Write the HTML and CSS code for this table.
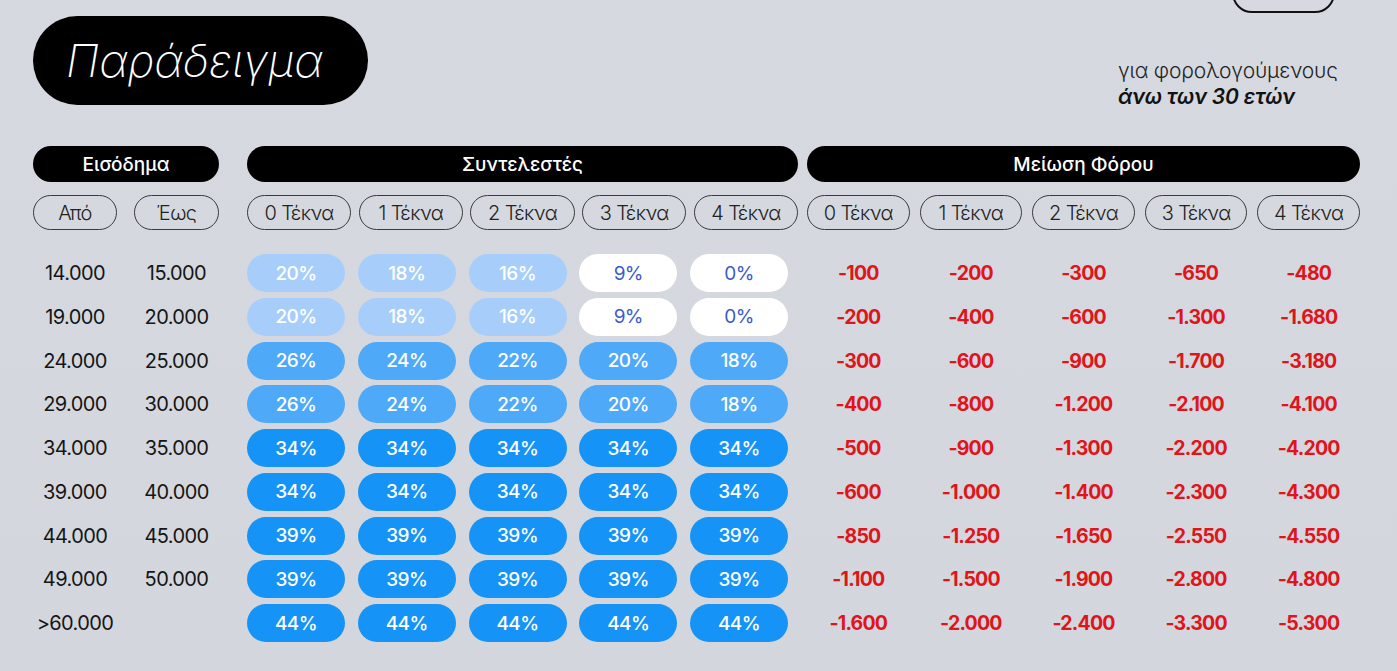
FILE: index.html
```html
<!DOCTYPE html>
<html lang="el">
<head>
<meta charset="utf-8">
<title>Παράδειγμα</title>
<link rel="stylesheet" href="styles.css">
</head>
<body>
<div class="page">
  <div class="top">
    <div class="title">Παράδειγμα</div>
    <div class="aside">
      <div class="tab"></div>
      <div class="sub">
        <div class="sub-line">για φορολογούμενους</div>
        <div class="sub-line strong">άνω των 30 ετών</div>
      </div>
    </div>
  </div>

  <div class="table">
    <div class="section income">
      <div class="head">Εισόδημα</div>
      <div class="labels two">
        <div class="label">Από</div>
        <div class="label">Έως</div>
      </div>
      <div class="rows two">
        <div class="num">14.000</div><div class="num">15.000</div>
        <div class="num">19.000</div><div class="num">20.000</div>
        <div class="num">24.000</div><div class="num">25.000</div>
        <div class="num">29.000</div><div class="num">30.000</div>
        <div class="num">34.000</div><div class="num">35.000</div>
        <div class="num">39.000</div><div class="num">40.000</div>
        <div class="num">44.000</div><div class="num">45.000</div>
        <div class="num">49.000</div><div class="num">50.000</div>
        <div class="num">&gt;60.000</div><div class="num"></div>
      </div>
    </div>

    <div class="section rates">
      <div class="head">Συντελεστές</div>
      <div class="labels five">
        <div class="label">0 Τέκνα</div>
        <div class="label">1 Τέκνα</div>
        <div class="label">2 Τέκνα</div>
        <div class="label">3 Τέκνα</div>
        <div class="label">4 Τέκνα</div>
      </div>
      <div class="rows pills">
        <div class="pill light">20%</div><div class="pill light">18%</div><div class="pill light">16%</div><div class="pill white">9%</div><div class="pill white">0%</div>
        <div class="pill light">20%</div><div class="pill light">18%</div><div class="pill light">16%</div><div class="pill white">9%</div><div class="pill white">0%</div>
        <div class="pill mid">26%</div><div class="pill mid">24%</div><div class="pill mid">22%</div><div class="pill mid">20%</div><div class="pill mid">18%</div>
        <div class="pill mid">26%</div><div class="pill mid">24%</div><div class="pill mid">22%</div><div class="pill mid">20%</div><div class="pill mid">18%</div>
        <div class="pill strong">34%</div><div class="pill strong">34%</div><div class="pill strong">34%</div><div class="pill strong">34%</div><div class="pill strong">34%</div>
        <div class="pill strong">34%</div><div class="pill strong">34%</div><div class="pill strong">34%</div><div class="pill strong">34%</div><div class="pill strong">34%</div>
        <div class="pill strong">39%</div><div class="pill strong">39%</div><div class="pill strong">39%</div><div class="pill strong">39%</div><div class="pill strong">39%</div>
        <div class="pill strong">39%</div><div class="pill strong">39%</div><div class="pill strong">39%</div><div class="pill strong">39%</div><div class="pill strong">39%</div>
        <div class="pill strong">44%</div><div class="pill strong">44%</div><div class="pill strong">44%</div><div class="pill strong">44%</div><div class="pill strong">44%</div>
      </div>
    </div>

    <div class="section cuts">
      <div class="head">Μείωση Φόρου</div>
      <div class="labels five wide">
        <div class="label">0 Τέκνα</div>
        <div class="label">1 Τέκνα</div>
        <div class="label">2 Τέκνα</div>
        <div class="label">3 Τέκνα</div>
        <div class="label">4 Τέκνα</div>
      </div>
      <div class="rows five wide">
        <div class="neg">-100</div><div class="neg">-200</div><div class="neg">-300</div><div class="neg">-650</div><div class="neg">-480</div>
        <div class="neg">-200</div><div class="neg">-400</div><div class="neg">-600</div><div class="neg">-1.300</div><div class="neg">-1.680</div>
        <div class="neg">-300</div><div class="neg">-600</div><div class="neg">-900</div><div class="neg">-1.700</div><div class="neg">-3.180</div>
        <div class="neg">-400</div><div class="neg">-800</div><div class="neg">-1.200</div><div class="neg">-2.100</div><div class="neg">-4.100</div>
        <div class="neg">-500</div><div class="neg">-900</div><div class="neg">-1.300</div><div class="neg">-2.200</div><div class="neg">-4.200</div>
        <div class="neg">-600</div><div class="neg">-1.000</div><div class="neg">-1.400</div><div class="neg">-2.300</div><div class="neg">-4.300</div>
        <div class="neg">-850</div><div class="neg">-1.250</div><div class="neg">-1.650</div><div class="neg">-2.550</div><div class="neg">-4.550</div>
        <div class="neg">-1.100</div><div class="neg">-1.500</div><div class="neg">-1.900</div><div class="neg">-2.800</div><div class="neg">-4.800</div>
        <div class="neg">-1.600</div><div class="neg">-2.000</div><div class="neg">-2.400</div><div class="neg">-3.300</div><div class="neg">-5.300</div>
      </div>
    </div>
  </div>
</div>
</body>
</html>
```

FILE: styles.css
```css
* { box-sizing: border-box; }

html, body {
  margin: 0;
  padding: 0;
  background: #d5d9df;
}

body {
  font-family: Inter, "Noto Sans", "Liberation Sans", sans-serif;
  color: #111;
  overflow: hidden;
}

.page {
  width: 1397px;
  height: 671px;
  padding: 0 37px 0 33px;
  background: linear-gradient(180deg, #d6dae0 0%, #d3d7dd 100%);
}

/* Top */
.top {
  display: flex;
  justify-content: space-between;
  align-items: flex-start;
}

.title {
  margin-top: 16px;
  width: 335px;
  height: 89px;
  border-radius: 45px;
  background: #000;
  color: #fff;
  font-size: 45px;
  font-weight: 200;
  font-style: italic;
  display: flex;
  align-items: center;
  padding-left: 33px;
}

.aside {
  display: flex;
  flex-direction: column;
  align-items: flex-end;
}

.tab {
  width: 103px;
  height: 40px;
  margin-top: -27px;
  margin-right: 25px;
  border: 2px solid #111;
  border-radius: 20px;
}

.sub {
  margin-top: 45px;
  width: 242px;
  font-size: 21px;
  line-height: 26px;
  color: #222;
  font-weight: 300;
  letter-spacing: -0.2px;
}

.sub-line.strong {
  font-weight: 600;
  font-style: italic;
  color: #111;
}

/* Table */
.table {
  display: flex;
  margin-top: 36px;
}

.section {
  display: flex;
  flex-direction: column;
}

.income { width: 186px; }
.rates { width: 551px; margin-left: 28px; }
.cuts { width: 553px; margin-left: 9px; }

.head {
  height: 36px;
  border-radius: 18px;
  background: #000;
  color: #fff;
  font-size: 19px;
  font-weight: 500;
  display: flex;
  align-items: center;
  justify-content: center;
}

.labels {
  display: grid;
  margin-top: 13px;
}

.labels.two { grid-template-columns: 84px 85px; column-gap: 17px; }
.labels.five { grid-template-columns: repeat(5, 1fr); column-gap: 7.5px; }
.labels.five.wide { column-gap: 10px; }

.label {
  height: 35px;
  border: 1px solid #3a3a3a;
  border-radius: 18px;
  font-size: 20px;
  font-weight: 300;
  color: #222;
  display: flex;
  align-items: center;
  justify-content: center;
  letter-spacing: -0.6px;
}

.rows {
  display: grid;
  margin-top: 24px;
  row-gap: 5.75px;
  grid-auto-rows: 38px;
}

.rows.two { grid-template-columns: 84px 85px; column-gap: 17px; }
.rows.five { grid-template-columns: repeat(5, 1fr); column-gap: 10px; }
.rows.pills { grid-template-columns: repeat(5, 98px); column-gap: 12.75px; }

.num, .neg, .pill {
  display: flex;
  align-items: center;
  justify-content: center;
  font-size: 19px;
  letter-spacing: -0.6px;
}

.num {
  color: #151515;
  font-weight: 400;
  font-size: 20px;
}

.neg {
  color: #e0141b;
  font-weight: 650;
  font-size: 19.5px;
  letter-spacing: -0.8px;
}

.pill {
  border-radius: 19px;
  color: #fff;
  font-weight: 500;
}

.pill.light { background: #a7cefa; }
.pill.white { background: #ffffff; color: #3a5acd; font-weight: 400; }
.pill.mid { background: #4ea9f8; }
.pill.strong { background: #1593f6; }
```
